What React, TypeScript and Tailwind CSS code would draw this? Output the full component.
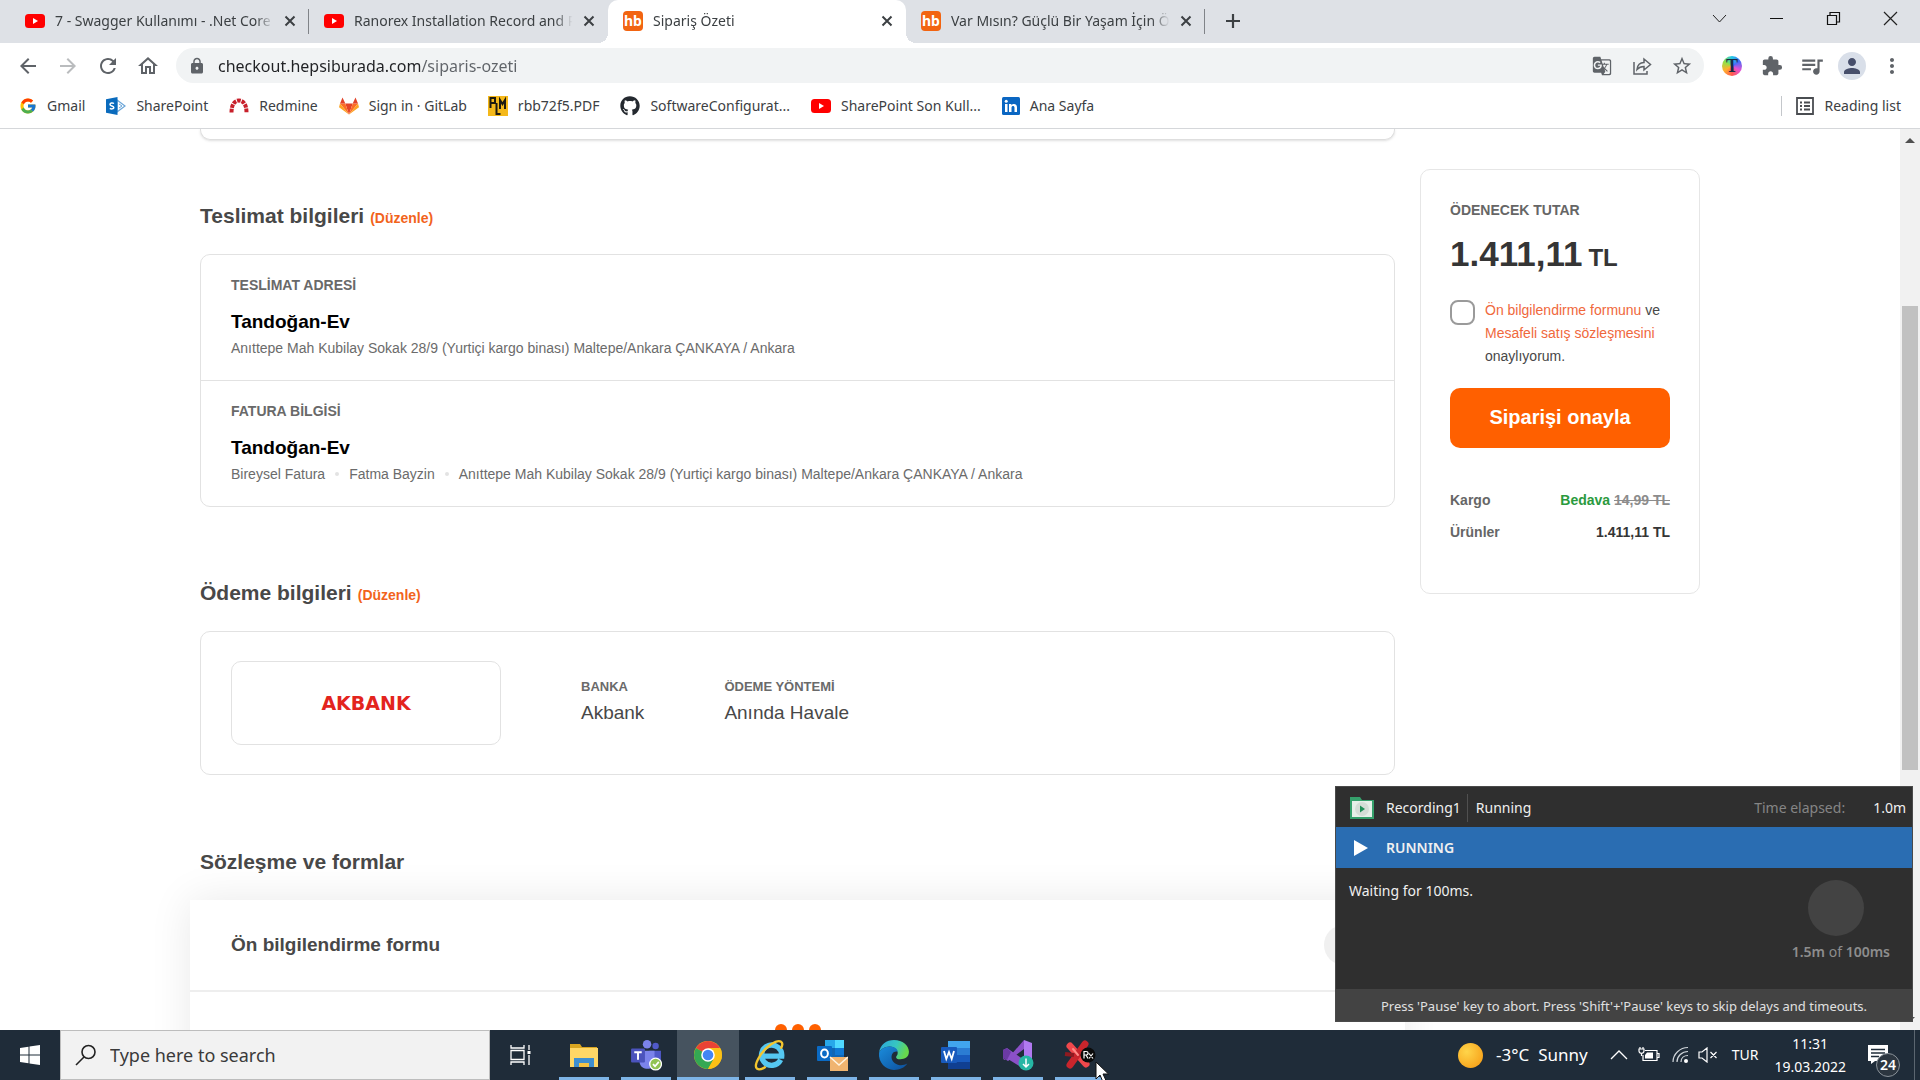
import React from "react";
import { FcGoogle } from "react-icons/fc";
import { FaGithub } from "react-icons/fa";
import {
  MdArrowBack,
  MdArrowForward,
  MdExtension,
  MdGTranslate,
  MdLock,
  MdMoreVert,
  MdOutlineHome,
  MdPerson,
  MdQueueMusic,
  MdRefresh,
  MdStarBorder,
} from "react-icons/md";

const UI = "font-['Segoe_UI','Noto_Sans',sans-serif]";

/* ---------- favicons ---------- */

const YoutubeIcon = () => (
  <svg viewBox="0 0 20 20" className="size-5 shrink-0">
    <rect x="0" y="3" width="20" height="14" rx="3.500" fill="#f00" />
    <path d="M8 7l5 3-5 3z" fill="#fff" />
  </svg>
);

const HbIcon = () => (
  <span className="flex size-5 shrink-0 items-center justify-center rounded-sm bg-[#f26411] text-sm leading-5 font-bold text-white">
    hb
  </span>
);

const SharePointIcon = () => (
  <svg viewBox="0 0 20 20" className="size-5">
    <path d="M11 4l8 6-8 6z" fill="#fff" stroke="#6aa5d8" strokeWidth="1.200" />
    <path d="M13 8l3 2-3 2" fill="none" stroke="#6aa5d8" />
    <path d="M0 3.200L11.500 1v18L0 16.800z" fill="#0a6bbd" />
    <path d="M8 7.500C6.500 6.500 4 6.800 4 8.400c0 1.800 3.800 1.300 3.800 3.100 0 1.600-2.600 1.700-4 .8" fill="none" stroke="#fff" strokeWidth="1.500" />
  </svg>
);

const RedmineIcon = () => (
  <svg viewBox="0 0 20 20" className="size-5">
    <path d="M2.500 16.500C2.500 8 6 4.500 10 4.500s7.500 3.500 7.500 12" fill="none" stroke="#c8202b" strokeWidth="4" strokeDasharray="3.600 1" />
  </svg>
);

const GitlabIcon = () => (
  <svg viewBox="0 0 20 20" className="size-5">
    <path d="M10 18.500L6.300 7.500h7.400z" fill="#e24329" />
    <path d="M10 18.500L1 7.500h5.300zM10 18.500l9-11h-5.300z" fill="#fc6d26" />
    <path d="M1 7.500L0 11.300 10 18.500zM19 7.500l1 3.800-10 7.200z" fill="#fca326" />
    <path d="M1 7.500L3.500 1.500 6.300 7.500zM19 7.500L16.500 1.500 13.700 7.500z" fill="#e24329" />
  </svg>
);

const PlmIcon = () => (
  <svg viewBox="0 0 20 20" className="size-5">
    <rect width="20" height="20" fill="#f4b81a" />
    <path d="M2.500 12V2H7v5H2.500M8.500 7v11h4M12 13V4l2.500 4L17 4v9" fill="none" stroke="#1d1a10" strokeWidth="2" />
  </svg>
);

const LinkedinIcon = () => (
  <svg viewBox="0 0 18 18" className="size-[18px]">
    <rect width="18" height="18" rx="1.500" fill="#0a66c2" />
    <path d="M3 7h2.500v8H3zM7 7h2.400v1.200C10.800 6.200 15 6.300 15 10.200V15h-2.500v-4.300c0-2.200-3-2-3 0V15H7z" fill="#fff" />
    <circle cx="4.200" cy="4.200" r="1.500" fill="#fff" />
  </svg>
);

/* ---------- browser chrome ---------- */

const CloseIcon = () => (
  <svg viewBox="0 0 12 12" className="size-3">
    <path d="M1.500 1.500l9 9M10.500 1.500l-9 9" stroke="#3c4043" strokeWidth="2" />
  </svg>
);

type TabProps = { icon: React.ReactNode; title: string; active?: boolean; divider?: boolean };

function Tab({ icon, title, active, divider }: TabProps) {
  return (
    <div
      className={
        active
          ? "relative flex h-full w-[298px] items-center rounded-t-[10px] bg-white pr-[7px] pb-px pl-[15px]"
          : "relative flex h-full w-[299px] items-center pr-[7px] pb-px pl-[15px]"
      }
    >
      {active && (
        <>
          <span className="absolute bottom-0 -left-2.5 size-2.5 bg-[radial-gradient(circle_at_0_0,transparent_10px,white_10px)]" />
          <span className="absolute -right-2.5 bottom-0 size-2.5 bg-[radial-gradient(circle_at_100%_0,transparent_10px,white_10px)]" />
        </>
      )}
      {icon}
      <button className="ml-2.5 min-w-0 flex-1 overflow-hidden text-left text-sm whitespace-nowrap text-[#3c4043] [mask-image:linear-gradient(to_right,black_90%,transparent_98%)]">
        {title}
      </button>
      <button aria-label="Close tab" className="flex size-6 shrink-0 items-center justify-center">
        <CloseIcon />
      </button>
      {divider && <span className="absolute top-[9px] right-0 h-[25px] w-px bg-[#808388]" />}
    </div>
  );
}

const Share = () => (
  <svg viewBox="0 0 20 20" className="size-5" fill="none" stroke="#5f6368" strokeWidth="1.500">
    <path d="M2 6v12h13v-3" />
    <path d="M5 13.500C5.500 9 8 6.500 12 6.500V3l6.500 5.500L12 14v-3.500c-3 0-5 .8-7 3z" />
  </svg>
);

function TabStrip() {
  return (
    <div className="flex h-[43px] items-center bg-[#dee1e6] pl-2.5">
      <div className="flex h-full">
        <Tab icon={<YoutubeIcon />} title="7 - Swagger Kullanımı - .Net Core" divider />
        <Tab icon={<YoutubeIcon />} title="Ranorex Installation Record and P" />
        <Tab icon={<HbIcon />} title="Sipariş Özeti" active />
        <Tab icon={<HbIcon />} title="Var Mısın? Güçlü Bir Yaşam İçin Ö" divider />
      </div>
      <button aria-label="New tab" className="mb-px ml-5">
        <svg viewBox="0 0 16 16" className="size-4">
          <path d="M8 1v14M1 8h14" stroke="#3c4043" strokeWidth="2.200" />
        </svg>
      </button>
      <div className="mr-[22px] mb-1.5 ml-auto flex items-center gap-[42px]">
        <button aria-label="Search tabs">
          <svg viewBox="0 0 15 15" className="size-[15px]" fill="none" stroke="#222">
            <path d="M1 4l6.500 7L14 4" />
          </svg>
        </button>
        <button aria-label="Minimize">
          <svg viewBox="0 0 15 15" className="size-[15px]" stroke="#111">
            <path d="M1 7.500h13" />
          </svg>
        </button>
        <button aria-label="Restore">
          <svg viewBox="0 0 15 15" className="size-[15px]" fill="none" stroke="#111" strokeWidth="1.200">
            <path d="M1.500 4.500h9v9h-9zM4 4.500v-3h9.500v9.500h-3" />
          </svg>
        </button>
        <button aria-label="Close">
          <svg viewBox="0 0 15 15" className="size-[15px]" stroke="#222" strokeWidth="1.200">
            <path d="M1 1l13 13M14 1L1 14" />
          </svg>
        </button>
      </div>
    </div>
  );
}

const SLOT = "flex size-7 items-center justify-center";

function Toolbar() {
  return (
    <div className="flex h-[45px] items-center gap-3.5 px-3.5 text-2xl text-[#5f6368]">
      <div className="flex items-center gap-3">
        <button aria-label="Back" className={SLOT}><MdArrowBack /></button>
        <button aria-label="Forward" className={`${SLOT} text-[#babcbe]`}><MdArrowForward /></button>
        <button aria-label="Reload" className={SLOT}><MdRefresh /></button>
        <button aria-label="Home" className={SLOT}><MdOutlineHome /></button>
      </div>
      <div className="flex h-[35px] flex-1 items-center rounded-full bg-[#f1f3f4] pr-2 pl-3">
        <MdLock className="text-lg" />
        <input
          aria-label="Address"
          defaultValue="checkout.hepsiburada.com/siparis-ozeti"
          className="ml-3 min-w-0 flex-1 bg-[linear-gradient(to_right,#202124_204px,#5f6368_204px)] bg-clip-text text-base text-transparent outline-none"
        />
        <div className="flex items-center gap-3">
          <button aria-label="Translate" className={SLOT}><MdGTranslate className="text-xl" /></button>
          <button aria-label="Share" className={SLOT}><Share /></button>
          <button aria-label="Bookmark" className={SLOT}><MdStarBorder className="text-[22px]" /></button>
        </div>
      </div>
      <div className="flex items-center gap-3">
        <button aria-label="Text extension" className={SLOT}>
          <span className="flex size-5 items-center justify-center rounded-full bg-[conic-gradient(#22c7e8,#4a6cf7,#e94fd0,#ff5a4e,#ffb02e,#8fe04a,#22c7e8)] font-['Liberation_Serif',serif] text-lg leading-5 font-bold text-[#1a2a44]">
            T
          </span>
        </button>
        <button aria-label="Extensions" className={SLOT}><MdExtension className="text-[22px]" /></button>
        <button aria-label="Media" className={SLOT}><MdQueueMusic className="text-[26px]" /></button>
        <button aria-label="Profile" className={`${SLOT} rounded-full bg-[#d9dfe9] text-[#474f6b]`}>
          <MdPerson />
        </button>
        <button aria-label="Menu" className={SLOT}><MdMoreVert /></button>
      </div>
    </div>
  );
}

const bookmarks: { icon: React.ReactNode; label: string }[] = [
  { icon: <FcGoogle className="text-lg" />, label: "Gmail" },
  { icon: <SharePointIcon />, label: "SharePoint" },
  { icon: <RedmineIcon />, label: "Redmine" },
  { icon: <GitlabIcon />, label: "Sign in · GitLab" },
  { icon: <PlmIcon />, label: "rbb72f5.PDF" },
  { icon: <FaGithub className="text-xl text-[#24292f]" />, label: "SoftwareConfigurat..." },
  { icon: <YoutubeIcon />, label: "SharePoint Son Kull..." },
  { icon: <LinkedinIcon />, label: "Ana Sayfa" },
];

function Bookmarks() {
  return (
    <div className="flex h-[41px] items-center border-b border-[#d5d7da] pb-1 pl-[19px] text-sm text-[#3c4043]">
      <nav className="flex items-center gap-[21px]">
        {bookmarks.map((b) => (
          <a key={b.label} href="#" className="flex items-center gap-2.5 whitespace-nowrap">
            {b.icon}
            {b.label}
          </a>
        ))}
      </nav>
      <button className="mr-[19px] ml-auto flex items-center gap-2.5 border-l border-[#c4c7cb] pl-3.5">
        <svg viewBox="0 0 18 18" className="size-[18px]" fill="none" stroke="#4a4d51" strokeWidth="1.800">
          <path d="M1 1h16v16H1zM4 5.500h2M4 9h2M4 12.500h2M8 5.500h6M8 9h6M8 12.500h6" />
        </svg>
        Reading list
      </button>
    </div>
  );
}

/* ---------- order page ---------- */

function SectionTitle({ children, edit }: { children: React.ReactNode; edit?: boolean }) {
  return (
    <h2 className="text-[21px] leading-7 font-bold text-[#484848]">
      {children}
      {edit && (
        <a href="#" className="ml-1.5 text-sm text-[#f2631c]">
          (Düzenle)
        </a>
      )}
    </h2>
  );
}

const Dot = () => <span className="size-1 rounded-full bg-[#e3e3e3]" />;

function AddressBlock({ label, children }: { label: string; children: React.ReactNode }) {
  return (
    <div className="px-[30px] pt-5 pb-[22px]">
      <h3 className="text-sm leading-5 font-bold text-[#696969]">{label}</h3>
      <p className="mt-[15px] text-[19px] leading-6 font-bold text-black">Tandoğan-Ev</p>
      <div className="mt-1 flex items-center gap-2.5 text-sm leading-5 text-[#6b6b6b]">{children}</div>
    </div>
  );
}

const ADDRESS = "Anıttepe Mah Kubilay Sokak 28/9 (Yurtiçi kargo binası) Maltepe/Ankara ÇANKAYA / Ankara";

function OrderDetails() {
  return (
    <main className="min-w-0 flex-1">
      <div className="h-[11px] rounded-b-[10px] border border-t-0 border-[#dedede] shadow-sm" />
      <section className="mt-[62px]">
        <SectionTitle edit>Teslimat bilgileri</SectionTitle>
        <div className="mt-6 divide-y divide-[#e2e2e2] rounded-[10px] border border-[#e2e2e2]">
          <AddressBlock label="TESLİMAT ADRESİ">
            <span>{ADDRESS}</span>
          </AddressBlock>
          <AddressBlock label="FATURA BİLGİSİ">
            <span>Bireysel Fatura</span>
            <Dot />
            <span>Fatma Bayzin</span>
            <Dot />
            <span>{ADDRESS}</span>
          </AddressBlock>
        </div>
      </section>
      <section className="mt-[72px]">
        <SectionTitle edit>Ödeme bilgileri</SectionTitle>
        <div className="mt-6 flex items-center rounded-[10px] border border-[#e2e2e2] px-[30px] py-[29px]">
          <div className="flex h-[84px] w-[270px] items-center justify-center rounded-[10px] border border-[#e2e2e2] font-['DejaVu_Sans',sans-serif] text-[19px] font-bold text-[#e3241d]">
            AKBANK
          </div>
          <dl className="ml-20 flex gap-20 pb-1">
            <div>
              <dt className="text-[13px] leading-5 font-bold text-[#6a6a6a]">BANKA</dt>
              <dd className="mt-1 text-[19px] leading-6 text-[#484848]">Akbank</dd>
            </div>
            <div>
              <dt className="text-[13px] leading-5 font-bold text-[#6a6a6a]">ÖDEME YÖNTEMİ</dt>
              <dd className="mt-1 text-[19px] leading-6 text-[#484848]">Anında Havale</dd>
            </div>
          </dl>
        </div>
      </section>
      <section className="mt-[73px]">
        <SectionTitle>Sözleşme ve formlar</SectionTitle>
        <div className="-mx-2.5 mt-6 h-60 bg-white shadow-[0_0_40px_rgba(0,0,0,0.09)]">
          <div className="flex items-center justify-between border-b-2 border-[#eeeeee] px-[41px] py-[25px]">
            <h3 className="text-[19px] font-bold text-[#484848]">Ön bilgilendirme formu</h3>
            <button aria-label="Expand form" className="size-10 rounded-full bg-[#f0f0f0]" />
          </div>
          <div className="mt-8 flex justify-center gap-[5px]">
            <span className="size-3 rounded-full bg-[#ff6000]" />
            <span className="size-3 rounded-full bg-[#ff6000]" />
            <span className="size-3 rounded-full bg-[#ff6000]" />
          </div>
        </div>
      </section>
    </main>
  );
}

function Summary() {
  return (
    <aside className="mt-10 w-[280px] shrink-0 rounded-[10px] border border-[#e6e6e6] px-[29px] pt-[30px] pb-[49px]">
      <h2 className="text-sm leading-5 font-bold text-[#666]">ÖDENECEK TUTAR</h2>
      <p className="mt-3 text-[35px] leading-[44px] font-bold text-[#353535]">
        1.411,11<span className="ml-1.5 text-2xl">TL</span>
      </p>
      <div className="mt-5 flex gap-2.5">
        <input
          id="agree"
          type="checkbox"
          className="mt-1 size-[25px] shrink-0 appearance-none rounded-[8px] border-2 border-[#9a9a9a] bg-white"
        />
        <label htmlFor="agree" className="mt-[3px] text-sm leading-[23px] text-[#484848]">
          <a href="#" className="text-[#f0683c]">Ön bilgilendirme formunu</a> ve{" "}
          <a href="#" className="text-[#f0683c]">Mesafeli satış sözleşmesini</a> onaylıyorum.
        </label>
      </div>
      <button className="mt-5 h-[60px] w-full rounded-[10px] bg-[#ff6000] pb-0.5 text-xl font-bold text-white">
        Siparişi onayla
      </button>
      <dl className="mt-10 text-sm leading-6 font-bold text-[#666]">
        <div className="flex items-center justify-between">
          <dt>Kargo</dt>
          <dd>
            <span className="text-[#2b9a3e]">Bedava</span> <s className="text-[#8c8c8c]">14,99 TL</s>
          </dd>
        </div>
        <div className="mt-2 flex items-center justify-between">
          <dt>Ürünler</dt>
          <dd className="text-[#353535]">1.411,11 TL</dd>
        </div>
      </dl>
    </aside>
  );
}

function Scrollbar() {
  return (
    <div className="flex w-5 flex-col items-center bg-[#f1f1f1]">
      <svg viewBox="0 0 20 20" className="size-5 shrink-0">
        <path d="M5 14l5-5 5 5z" fill="#505050" />
      </svg>
      <div className="mt-[157px] h-[464px] w-4 bg-[#c1c1c1]" />
      <svg viewBox="0 0 20 20" className="mt-auto size-5 shrink-0">
        <path d="M5 7l5 5 5-5z" fill="#505050" />
      </svg>
    </div>
  );
}

/* ---------- recorder overlay ---------- */

function Recorder() {
  return (
    <section
      aria-label="Recording1"
      className={`absolute right-[7px] bottom-2 flex h-[236px] w-[578px] flex-col border border-[#4a4a4a] bg-[#2f2f2f] text-sm leading-5 text-[#f0f0f0] ${UI}`}
    >
      <header className="flex h-10 items-center pt-px pr-1.5 pl-3.5">
        <svg viewBox="0 0 24 24" className="size-6">
          <path d="M0 1h10l2 3h12v19H0z" fill="#35a06b" />
          <path d="M2 5h20v16H2z" fill="#e6efe8" />
          <circle cx="12" cy="13" r="7" fill="#d4ddd6" />
          <path d="M10 9.500l5 3.500-5 3.500z" fill="#1f8f57" />
        </svg>
        <span className="ml-3 border-r border-[#505050] py-1 pr-1.5">Recording1</span>
        <span className="ml-2">Running</span>
        <span className="ml-auto text-[#858585]">Time elapsed:</span>
        <span className="ml-7">1.0m</span>
      </header>
      <div className="flex h-[41px] items-center bg-[#2a6db2] pl-[18px] font-semibold">
        <svg viewBox="0 0 14 16" className="h-4 w-3.5">
          <path d="M0 0l14 8-14 8z" fill="#fff" />
        </svg>
        <span className="ml-[18px]">RUNNING</span>
      </div>
      <div className="flex flex-1 justify-between pr-[22px] pl-[13px]">
        <p className="pt-[13px]">Waiting for 100ms.</p>
        <div className="pt-3 text-[#8d8d8d]">
          <div className="ml-4 size-14 rounded-full bg-[#434343]" />
          <p className="mt-1.5 leading-5">
            <span className="font-semibold">1.5m</span> of <span className="font-semibold">100ms</span>
          </p>
        </div>
      </div>
      <footer className="flex h-8 items-center justify-center bg-[#434343] pt-0.5 text-[13px] text-[#e0e0e0]">
        Press 'Pause' key to abort. Press 'Shift'+'Pause' keys to skip delays and timeouts.
      </footer>
    </section>
  );
}

/* ---------- taskbar ---------- */

const FolderIcon = () => (
  <svg viewBox="0 0 30 30" className="size-[30px]">
    <path d="M1 4h10l2 3h15v8H1z" fill="#d9a520" />
    <path d="M1 8h28v19H1z" fill="#ffd766" />
    <path d="M5 27V18h20v9h-5v-4h-10v4z" fill="#3f8fd0" />
    <path d="M10 23h10v4H10z" fill="#f6c445" />
  </svg>
);

const TeamsIcon = () => (
  <svg viewBox="0 0 30 30" className="size-8">
    <circle cx="16" cy="5" r="4" fill="#7b83eb" />
    <circle cx="24" cy="6.500" r="3" fill="#5059c9" />
    <path d="M18 11h11v8c0 6-8 7-9 3z" fill="#5059c9" />
    <path d="M9 11h14v11c0 8-13 8-14 0z" fill="#7b83eb" />
    <rect x="1" y="9" width="13" height="13" rx="1" fill="#4b53bc" />
    <path d="M4 12.500h7M7.500 12.500v7" stroke="#fff" strokeWidth="1.800" />
    <circle cx="24" cy="23.500" r="5.500" fill="#92c353" stroke="#fff" strokeWidth="1.200" />
    <path d="M21.500 23.500l2 2 3.500-4" fill="none" stroke="#fff" strokeWidth="1.600" />
  </svg>
);

const ChromeIcon = () => (
  <svg viewBox="0 0 30 30" className="size-[30px]">
    <circle cx="15" cy="15" r="14" fill="#fbc116" />
    <path d="M15 15L2.900 8A14 14 0 0 1 27.100 8z" fill="#ea4335" />
    <path d="M15 15L2.900 8A14 14 0 0 0 15 29l5-9z" fill="#34a853" />
    <path d="M15 8h12.100L22 15z" fill="#ea4335" />
    <path d="M27.100 8H15l6 11-6 10A14 14 0 0 0 27.100 8z" fill="#fbc116" />
    <circle cx="15" cy="15" r="6.800" fill="#fff" />
    <circle cx="15" cy="15" r="5.300" fill="#4285f4" />
  </svg>
);

const IeIcon = () => (
  <svg viewBox="0 0 30 30" className="size-8">
    <path d="M25 19.500A9.500 9.500 0 1 1 26 16H9" fill="none" stroke="#55c8f2" strokeWidth="5" />
    <path d="M25 9C29 3 25-1 16 5 6 12-1 25 3 28c2 1.200 5 0 8-2" fill="none" stroke="#f4c62f" strokeWidth="2.200" />
  </svg>
);

const OutlookIcon = () => (
  <svg viewBox="0 0 32 32" className="size-8">
    <path d="M9 1h19v20H9z" fill="#1066b5" />
    <path d="M9 1h10v8H9z" fill="#28a8ea" />
    <path d="M19 1h9v8h-9z" fill="#50d9ff" />
    <path d="M19 9h9v7h-9z" fill="#0f78d4" />
    <rect x="1" y="7" width="15" height="15" rx="1" fill="#0a6ac4" />
    <ellipse cx="8.500" cy="14.500" rx="3.400" ry="3.900" fill="none" stroke="#fff" strokeWidth="2" />
    <path d="M14 18h18v14H14z" fill="#f0b470" />
    <path d="M14 18l9 8 9-8" fill="none" stroke="#fff3df" strokeWidth="1.500" />
  </svg>
);

const EdgeIcon = () => (
  <svg viewBox="0 0 30 30" className="size-8">
    <defs>
      <linearGradient id="edgeTop" x1="0" x2="1" y1="0" y2="0.300">
        <stop offset="0" stopColor="#2aa5de" />
        <stop offset="0.600" stopColor="#37c6c0" />
        <stop offset="1" stopColor="#67d84c" />
      </linearGradient>
      <linearGradient id="edgeLow" x1="0" x2="1" y1="0" y2="1">
        <stop offset="0" stopColor="#1b8ddc" />
        <stop offset="1" stopColor="#0c4f9c" />
      </linearGradient>
    </defs>
    <path d="M1 13C2 5 8 1 15 1c8 0 14 5 14 11 0 5-4 7-8 7-3 0-4-1-4-2 0-.8 1.500-1.500 1.500-4C18.500 10 15 7 11 7 6 7 2 10 1 13z" fill="url(#edgeTop)" />
    <path d="M1 13c1-3 5-6 10-6 4 0 7.500 2 7.500 5-7-2-9 11 2 12.500 2.500.3 5-.5 7-1.500C25 27 20 29 15 29 7 29 0 22 1 13z" fill="url(#edgeLow)" />
  </svg>
);

const WordIcon = () => (
  <svg viewBox="0 0 32 30" className="h-[30px] w-8">
    <path d="M8 1h22v7H8z" fill="#41a5ee" />
    <path d="M8 8h22v7H8z" fill="#2b7cd3" />
    <path d="M8 15h22v7H8z" fill="#185abd" />
    <path d="M8 22h22v7H8z" fill="#103f91" />
    <rect x="1" y="7" width="16" height="16" rx="1" fill="#185abd" />
    <path d="M4 11l2.300 8L9 12l2.700 7L14 11" fill="none" stroke="#fff" strokeWidth="1.800" />
  </svg>
);

const VsIcon = () => (
  <svg viewBox="0 0 32 32" className="size-8">
    <path d="M22 1l8 3v22l-8 4z" fill="#b179f1" />
    <path d="M22 1L8 17l-5 4-2-1v-3L22 30V21L5 9 1 11v8l5 3L22 10z" fill="#8b50c8" />
    <path d="M1 11l4-2 4 4-4 8-4-2z" fill="#6b3aa5" />
    <circle cx="24" cy="24" r="7.500" fill="#26b6a5" />
    <path d="M24 19.500v8M21 25l3 3 3-3" fill="none" stroke="#fff" strokeWidth="1.500" />
  </svg>
);

const RanorexIcon = () => (
  <svg viewBox="0 0 32 30" className="h-[30px] w-8">
    <path d="M6 6l16 18" stroke="#f0484c" strokeWidth="7" strokeLinecap="round" />
    <path d="M21 4L6 25" stroke="#c9252c" strokeWidth="7" strokeLinecap="round" />
    <path d="M1 14l9 1" stroke="#8f1a20" strokeWidth="4" />
    <path d="M9 9l5 6" stroke="#ff8a86" strokeWidth="2" strokeLinecap="round" />
    <circle cx="24" cy="15" r="7.500" fill="#0b0b0b" />
    <path d="M20 18.500v-7h2.200c2.500 0 2.500 3.500 0 3.500H20m2 0l2 3.500M25 13.500l4 5M29 13.500l-4 5" fill="none" stroke="#fff" strokeWidth="1.200" />
  </svg>
);

const apps = [
  { name: "File Explorer", icon: <FolderIcon /> },
  { name: "Teams", icon: <TeamsIcon /> },
  { name: "Chrome", icon: <ChromeIcon />, active: true },
  { name: "Internet Explorer", icon: <IeIcon /> },
  { name: "Outlook", icon: <OutlookIcon /> },
  { name: "Edge", icon: <EdgeIcon /> },
  { name: "Word", icon: <WordIcon /> },
  { name: "Visual Studio", icon: <VsIcon /> },
  { name: "Ranorex", icon: <RanorexIcon /> },
];

function Taskbar() {
  return (
    <footer className={`flex h-[50px] shrink-0 items-stretch bg-[#1f2c39] text-white ${UI}`}>
      <button aria-label="Start" className="flex w-[60px] items-center justify-center">
        <svg viewBox="0 0 20 20" className="size-5">
          <path d="M0 3l8.500-1.200v7.700H0zM9.500 1.600L20 0v9.500H9.500zM0 10.500h8.500v7.700L0 17zM9.500 10.500H20V20L9.500 18.400z" fill="#fff" />
        </svg>
      </button>
      <label className="flex w-[430px] items-center border border-[#bdbdbd] bg-[#f2f2f2] pl-3.5">
        <svg viewBox="0 0 22 22" className="size-[22px]" fill="none" stroke="#222" strokeWidth="1.600">
          <circle cx="13.500" cy="8" r="6.500" />
          <path d="M9 13l-8 8" />
        </svg>
        <input
          aria-label="Search"
          placeholder="Type here to search"
          className="ml-[13px] min-w-0 flex-1 bg-transparent text-lg outline-none placeholder:text-[#3a3a3a]"
        />
      </label>
      <button aria-label="Task view" className="flex w-[63px] items-center justify-center pr-0.5">
        <svg viewBox="0 0 22 20" className="h-5 w-[22px]" fill="none" stroke="#fff" strokeWidth="1.300">
          <path d="M1 0v3h13V0M1 20v-3h13v3M1 5.500h13v9H1zM19 0v5M19 10v10" />
          <path d="M17.500 6h3v3h-3z" fill="#fff" stroke="none" />
        </svg>
      </button>
      <nav className="flex">
        {apps.map((a) => (
          <button
            key={a.name}
            aria-label={a.name}
            className={a.active ? "flex w-[62px] flex-col items-center bg-[#46535f]" : "flex w-[62px] flex-col items-center"}
          >
            <span className="flex flex-1 items-center justify-center pt-0.5">{a.icon}</span>
            <span className={a.active ? "h-[3px] w-full bg-[#7db4e6]" : "h-[3px] w-[50px] bg-[#7db4e6]"} />
          </button>
        ))}
      </nav>
      <div className="ml-auto flex items-center">
        <span className="size-[25px] rounded-full bg-[radial-gradient(circle_at_35%_35%,#ffd54a,#f5960f)]" />
        <span className="ml-[13px] text-[17px] whitespace-pre">-3°C  Sunny</span>
        <svg viewBox="0 0 18 18" className="ml-[22px] size-[18px]" fill="none" stroke="#fff" strokeWidth="1.300">
          <path d="M1 13l8-8 8 8" />
        </svg>
        <svg viewBox="0 0 22 18" className="ml-2.5 h-[18px] w-[22px]" fill="none" stroke="#fff" strokeWidth="1.200">
          <path d="M7 4.500h12v10H5V9M19 7.500h2v4h-2" />
          <path d="M9 6.500h6v6H7V9z" fill="#fff" stroke="none" />
          <path d="M1 3h5v2c0 3-5 3-5 0zM2 1v2M5 1v2M3.500 7v3" />
        </svg>
        <svg viewBox="0 0 18 18" className="ml-3 size-[18px]" fill="none" stroke="#cfd5da" strokeWidth="1.200">
          <path d="M1 16C1 8 8 1.500 16 1.500M5 16C5 10 10 5.500 16 5.500M9 16c0-4 3-6.500 7-6.500" />
          <circle cx="14" cy="15" r="2" fill="#fff" stroke="none" />
        </svg>
        <svg viewBox="0 0 20 16" className="ml-2 h-4 w-5" fill="none" stroke="#fff" strokeWidth="1.200">
          <path d="M1 5h3l5-4v14l-5-4H1zM12.500 5l6 6M18.500 5l-6 6" />
        </svg>
        <span className="ml-3.5 text-sm">TUR</span>
        <time className="ml-4 text-center text-sm leading-[23px]">
          11:31
          <br />
          19.03.2022
        </time>
        <button aria-label="Notifications, 24 new" className="relative ml-[22px] h-9 w-8">
          <svg viewBox="0 0 20 19" className="absolute top-2 left-0 h-[19px] w-5">
            <path d="M0 0h20v16h-13l-4 3v-3H0z" fill="#fff" />
            <path d="M3 4.500h14M3 8h14M3 11.500h8" stroke="#1f2c39" strokeWidth="1.400" />
          </svg>
          <span className="absolute right-0 -bottom-1 flex size-6 items-center justify-center rounded-full border border-[#8a9299] bg-[#2c3640] text-sm leading-5 font-semibold">
            24
          </span>
        </button>
        <span className="ml-3.5 h-full w-1.5 border-l border-[#5b6670]" />
      </div>
    </footer>
  );
}

export default function App() {
  return (
    <div className="relative flex h-screen flex-col overflow-hidden bg-white">
      <header className={UI}>
        <TabStrip />
        <Toolbar />
        <Bookmarks />
      </header>
      <div className="relative flex min-h-0 flex-1">
        <div className="min-w-0 flex-1 overflow-hidden font-['Liberation_Sans',Arial,sans-serif]">
          <div className="mx-auto flex max-w-[1500px] items-start gap-[25px]">
            <OrderDetails />
            <Summary />
          </div>
        </div>
        <Scrollbar />
        <Recorder />
      </div>
      <Taskbar />
      <svg viewBox="0 0 14 22" className="absolute top-[1061px] left-[1095px] h-[22px] w-3.5">
        <path d="M1 1v17l4-4 3 7 3-1.500-3-6.500h5.500z" fill="#fff" stroke="#111" />
      </svg>
    </div>
  );
}
